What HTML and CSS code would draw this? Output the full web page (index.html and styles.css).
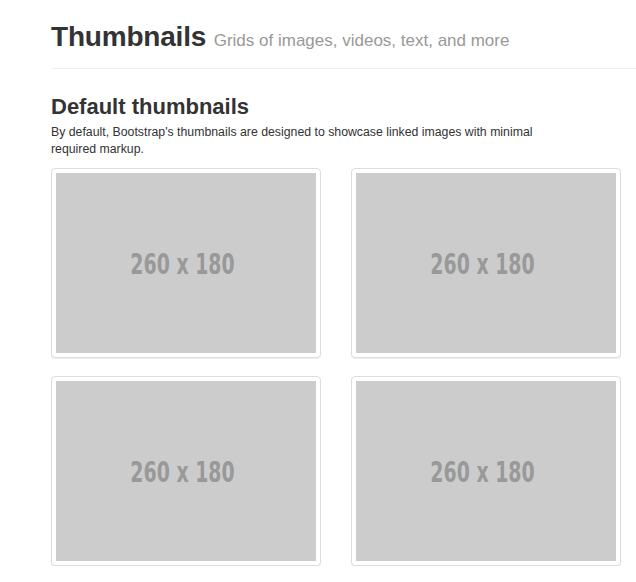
FILE: index.html
```html
<!DOCTYPE html>
<html>
<head>
<meta charset="utf-8">
<link rel="stylesheet" href="styles.css">
</head>
<body>
<section class="page">
  <header class="page-header">
    <h1 class="title">Thumbnails <small class="subtitle">Grids of images, videos, text, and more</small></h1>
  </header>
  <div class="content">
    <h2 class="section-title">Default thumbnails</h2>
    <p class="lead-text">By default, Bootstrap's thumbnails are designed to showcase linked images with minimal required markup.</p>
    <ul class="thumbnails">
      <li class="thumb"><div class="placeholder"><span class="ph-label">260 x 180</span></div></li>
      <li class="thumb"><div class="placeholder"><span class="ph-label">260 x 180</span></div></li>
      <li class="thumb"><div class="placeholder"><span class="ph-label">260 x 180</span></div></li>
      <li class="thumb"><div class="placeholder"><span class="ph-label">260 x 180</span></div></li>
    </ul>
  </div>
</section>
</body>
</html>
```
FILE: styles.css
```css
html, body {
  margin: 0;
  padding: 0;
  background: #fff;
}
body {
  font-family: "Liberation Sans", Arial, sans-serif;
  color: #333;
  font-size: 12.3px;
  line-height: 17px;
}
.page {
  padding-left: 51px;
}
.page-header {
  padding-bottom: 13px;
  border-bottom: 1px solid #eee;
}
.title {
  margin: 19px 0 0;
  font-size: 28px;
  line-height: 36px;
  font-weight: bold;
  color: #333;
  letter-spacing: -0.2px;
}
.subtitle {
  font-size: 17px;
  line-height: 1;
  font-weight: normal;
  color: #999;
  letter-spacing: 0;
}
.content {
  width: 570px;
}
.section-title {
  margin: 24px 0 0;
  font-size: 22px;
  line-height: 28px;
  font-weight: bold;
  color: #333;
}
.lead-text {
  margin: 3px 0 0;
  width: 495px;
}
.thumbnails {
  list-style: none;
  margin: 10px 0 0;
  padding: 0;
  display: grid;
  grid-template-columns: 270px 270px;
  column-gap: 30px;
  row-gap: 18px;
}
.thumb {
  border: 1px solid #ddd;
  border-radius: 4px;
  padding: 4px;
  box-shadow: 0 1px 1px rgba(0,0,0,0.075);
  background: #fff;
}
.placeholder {
  width: 260px;
  height: 180px;
  background: #ccc;
  color: #999;
  display: flex;
  align-items: center;
  justify-content: center;
  padding-top: 3px;
  padding-right: 7px;
  box-sizing: border-box;
}
.ph-label {
  display: inline-block;
  font-family: "DejaVu Sans Condensed", "DejaVu Sans", sans-serif;
  font-weight: bold;
  font-size: 28px;
  transform: scaleX(0.75);
  white-space: nowrap;
}
```
